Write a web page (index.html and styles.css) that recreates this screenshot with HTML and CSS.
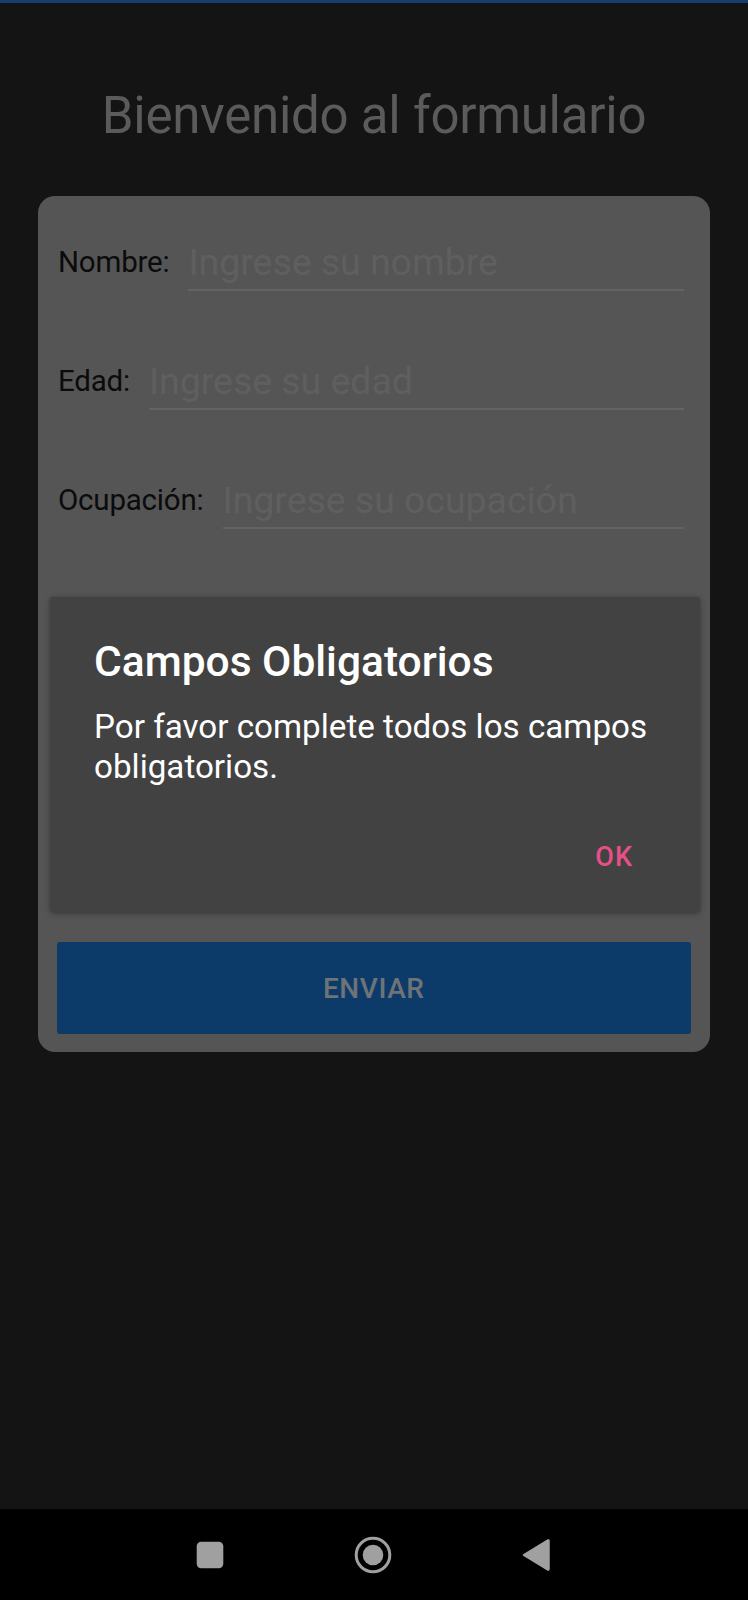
FILE: index.html
```html
<!DOCTYPE html>
<html lang="es">
<head>
<meta charset="utf-8">
<title>Formulario</title>
<link rel="stylesheet" href="styles.css">
</head>
<body>
<div class="screen">
  <div class="topline"></div>
  <main class="content">
    <h1 class="title">Bienvenido al formulario</h1>
    <section class="card">
      <div class="row">
        <span class="label">Nombre:</span>
        <div class="input"><span class="placeholder">Ingrese su nombre</span></div>
      </div>
      <div class="row">
        <span class="label">Edad:</span>
        <div class="input"><span class="placeholder">Ingrese su edad</span></div>
      </div>
      <div class="row">
        <span class="label">Ocupación:</span>
        <div class="input"><span class="placeholder">Ingrese su ocupación</span></div>
      </div>
      <div class="spacer"></div>
      <div class="button">ENVIAR</div>
    </section>
  </main>
  <nav class="navbar">
    <svg class="navicon" viewBox="0 0 40 40" width="40" height="40"><rect x="6.7" y="6.7" width="26.6" height="26.6" rx="4.5" fill="#a0a0a0"/></svg>
    <svg class="navicon" viewBox="0 0 40 40" width="40" height="40"><circle cx="20" cy="20" r="16.8" fill="none" stroke="#a0a0a0" stroke-width="3"/><circle cx="20" cy="20" r="10.3" fill="#a0a0a0"/></svg>
    <svg class="navicon" viewBox="0 0 40 40" width="40" height="40"><path d="M7.5 20 L32 5 Q33 4.6 33 6 L33 34 Q33 35.4 32 35 Z" fill="#a0a0a0" stroke="#a0a0a0" stroke-width="1.5" stroke-linejoin="round"/></svg>
  </nav>
  <div class="dialog">
    <h2 class="dialog-title">Campos Obligatorios</h2>
    <p class="dialog-msg">Por favor complete todos los campos obligatorios.</p>
    <div class="dialog-actions"><span class="dialog-ok">OK</span></div>
  </div>
</div>
</body>
</html>
```

FILE: styles.css
```css
html, body {
  margin: 0;
  padding: 0;
  background: #141414;
}

.screen {
  position: relative;
  width: 748px;
  height: 1600px;
  display: flex;
  flex-direction: column;
  font-family: Roboto, "Liberation Sans", sans-serif;
  background: #141414;
  overflow: hidden;
}

.topline {
  height: 3px;
  background: #163f70;
  flex: none;
}

.content {
  flex: 1;
  display: flex;
  flex-direction: column;
}

.title {
  margin: 82.5px 0 0;
  font-size: 51px;
  line-height: 60px;
  font-weight: 400;
  letter-spacing: -0.25px;
  color: #5b5b5b;
  text-align: center;
}

.card {
  margin: 50.5px 38.5px 0 38px;
  background: #555555;
  border-radius: 17px;
  padding: 43.5px 19px 18px 20px;
  display: flex;
  flex-direction: column;
}

.row {
  display: flex;
  align-items: flex-end;
  gap: 19px;
  padding-right: 7px;
  margin-bottom: 67.5px;
}

.row:nth-of-type(3) {
  margin-bottom: 0;
}

.label {
  font-size: 29.5px;
  line-height: 35px;
  letter-spacing: -0.2px;
  color: #0b0b0b;
  padding-bottom: 11px;
  white-space: nowrap;
}

.input {
  flex: 1;
  border-bottom: 2px solid #636363;
  padding-bottom: 4.5px;
}

.placeholder {
  display: block;
  font-size: 37.5px;
  line-height: 45px;
  letter-spacing: -0.05px;
  color: #5f5f5f;
  white-space: nowrap;
}

.spacer {
  height: 413px;
}

.button {
  height: 92px;
  margin-left: -1px;
  background: #0d3b69;
  border-radius: 3px;
  display: flex;
  align-items: center;
  justify-content: center;
  font-size: 28px;
  font-weight: 500;
  letter-spacing: 0.6px;
  color: #6e7378;
}

.navbar {
  flex: none;
  height: 91px;
  background: #000;
  display: flex;
  align-items: center;
  justify-content: center;
  gap: 123px;
  padding-right: 2px;
}

.navicon {
  display: block;
}

.dialog {
  position: absolute;
  left: 50px;
  top: 597px;
  width: 650px;
  height: 315px;
  box-sizing: border-box;
  padding: 40px 44px 39px 44px;
  background: #424242;
  border-radius: 3px;
  box-shadow: 0 2px 6px rgba(0, 0, 0, 0.25), 0 0 3px rgba(0, 0, 0, 0.15);
  display: flex;
  flex-direction: column;
}

.dialog-title {
  margin: 0;
  font-size: 42.5px;
  line-height: 50px;
  font-weight: 500;
  color: #ffffff;
}

.dialog-msg {
  margin: 20px 0 0;
  font-size: 33.2px;
  line-height: 40px;
  color: #ffffff;
}

.dialog-actions {
  margin-top: auto;
  display: flex;
  justify-content: flex-end;
  padding-right: 23px;
}

.dialog-ok {
  font-size: 27px;
  line-height: 32px;
  font-weight: 500;
  letter-spacing: 1px;
  color: #e84f87;
}
```
